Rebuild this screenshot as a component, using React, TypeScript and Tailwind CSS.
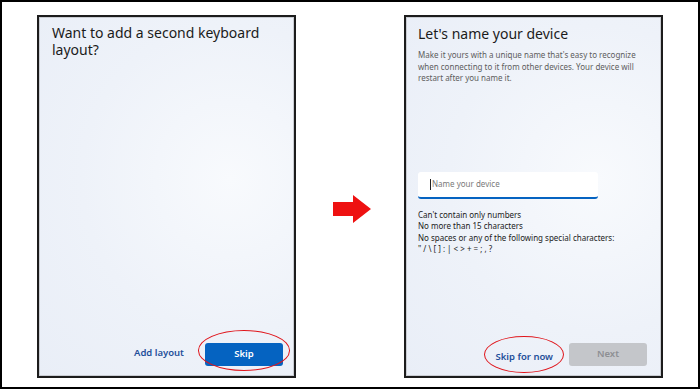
import type { FC, ReactNode } from 'react';

const font = { fontFamily: '"Noto Sans", "Open Sans", "Liberation Sans", sans-serif' };

const Panel: FC<{ children: ReactNode }> = ({ children }) => (
  <div className="relative flex h-[363px] w-[259px] flex-col border-2 border-[#1c1c1c] bg-[radial-gradient(ellipse_at_75%_45%,#f8fafd_0%,#eef2f9_55%,#e9eef7_100%)] shadow-[inset_0_0_0_1px_#c9ccd2]">
    {children}
  </div>
);

const Arrow: FC = () => (
  <svg width="38" height="28" viewBox="0 0 38 28">
    <polygon points="0,7 20,7 20,0 38,14 20,28 20,21 0,21" fill="#ee1111" />
  </svg>
);

const KeyboardPanel: FC = () => (
  <Panel>
    <h1 className="px-[13px] pt-[7px] text-[14px] leading-[17px] text-[#1b1b1b]">
      Want to add a second keyboard layout?
    </h1>
    <div className="mt-auto flex items-center justify-end gap-[7px] pb-[10px] pr-[11px]">
      <button className="h-[23px] w-[78px] text-[9.5px] font-semibold text-[#1f4f9a]">Add layout</button>
      <div className="relative">
        <button className="h-[23px] w-[78px] rounded-[3px] bg-[#0563c1] text-[9.5px] font-semibold text-white">
          Skip
        </button>
        <span className="pointer-events-none absolute -bottom-[5px] -left-[7px] -right-[7px] -top-[9px] rounded-[50%] border-[1.5px] border-[#e0151b]" />
      </div>
    </div>
  </Panel>
);

const DevicePanel: FC = () => (
  <Panel>
    <div className="px-[12px] pt-[8px]">
      <h1 className="text-[14px] leading-[17px] text-[#1b1b1b]">Let's name your device</h1>
      <p className="mt-[7px] whitespace-nowrap text-[8px] leading-[11.5px] text-[#5d5d5d]">
        Make it yours with a unique name that's easy to recognize
        <br />
        when connecting to it from other devices. Your device will
        <br />
        restart after you name it.
      </p>
      <div className="mt-[88px] flex h-[27px] w-[180px] items-center rounded-[3px] border-b-2 border-[#0563c1] bg-white pl-[12px]">
        <span className="mr-[1px] h-[11px] w-px bg-[#222]" />
        <span className="text-[8px] text-[#7a7a7a]">Name your device</span>
      </div>
      <div className="mt-[10px] whitespace-nowrap text-[8px] leading-[11.5px] text-[#1b1b1b]">
        <div>Can't contain only numbers</div>
        <div>No more than 15 characters</div>
        <div>No spaces or any of the following special characters:</div>
        <div>" / \ [ ] : | &lt; &gt; + = ; , ?</div>
      </div>
    </div>
    <div className="mt-auto flex items-center justify-end gap-[16px] pb-[10px] pr-[14px]">
      <div className="relative">
        <button className="text-[9.5px] font-semibold text-[#1f4f9a]">Skip for now</button>
        <span className="pointer-events-none absolute -bottom-[7px] -left-[11px] -right-[11px] -top-[6px] rounded-[50%] border-[1.5px] border-[#e0151b]" />
      </div>
      <button className="h-[23px] w-[78px] rounded-[3px] bg-[#c4c6ca] text-[9.5px] font-semibold text-[#8d8f93]">
        Next
      </button>
    </div>
  </Panel>
);

const App: FC = () => (
  <div className="flex h-[389px] w-[700px] items-start border-2 border-black bg-white pl-[35px] pt-[13px]" style={font}>
    <KeyboardPanel />
    <div className="flex h-[363px] w-[108px] items-center justify-center pl-[4px] pt-[24px]">
      <Arrow />
    </div>
    <DevicePanel />
  </div>
);

export default App;
